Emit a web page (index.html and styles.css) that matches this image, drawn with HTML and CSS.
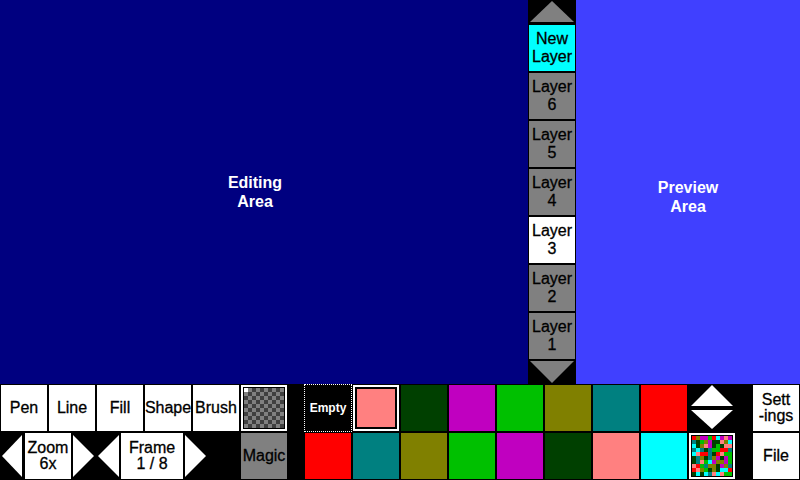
FILE: index.html
```html
<!DOCTYPE html>
<html lang="en">
<head>
  <meta charset="UTF-8">
  <title>Pixel Editor</title>
  <link rel="stylesheet" href="styles.css">
</head>
<body>
  <div class="screen">
    <div class="workspace">
      <div class="editing"><span>Editing<br>Area</span></div>

      <!-- Layer list -->
      <div class="layers">
        <div class="layer-arrow">
          <svg width="48" height="24" viewBox="0 0 48 24"><polygon points="2,22 24,1 46,22" fill="#808080"/></svg>
        </div>
        <div class="layer new">New<br>Layer</div>
        <div class="layer">Layer<br>6</div>
        <div class="layer">Layer<br>5</div>
        <div class="layer">Layer<br>4</div>
        <div class="layer current">Layer<br>3</div>
        <div class="layer">Layer<br>2</div>
        <div class="layer">Layer<br>1</div>
        <div class="layer-arrow">
          <svg width="48" height="24" viewBox="0 0 48 24"><polygon points="2,1 46,1 24,23" fill="#808080"/></svg>
        </div>
      </div>

      <div class="preview"><span>Preview<br>Area</span></div>
    </div>

    <!-- Bottom toolbar -->
    <div class="toolbar">
      <div class="btn">Pen</div>
      <div class="btn">Line</div>
      <div class="btn">Fill</div>
      <div class="btn">Shape</div>
      <div class="btn">Brush</div>
      <div class="cell">
        <div class="framed"><div class="checker"></div></div>
      </div>
      <div class="spacer"></div>
      <div class="cell empty"><span>Empty</span></div>
      <div class="cell">
        <div class="framed"><div class="swatch pink"></div></div>
      </div>
      <div class="cell darkgreen"></div>
      <div class="cell magenta"></div>
      <div class="cell green"></div>
      <div class="cell olive"></div>
      <div class="cell teal"></div>
      <div class="cell red"></div>
      <div class="cell dark">
        <svg width="46" height="46" viewBox="0 0 46 46">
          <polygon points="2,21 23,0 44,21" fill="#fff"/>
          <polygon points="2,25 44,25 23,44" fill="#fff"/>
        </svg>
      </div>
      <div class="spacer"></div>
      <div class="btn">Sett<br>-ings</div>

      <div class="nav">
        <div class="arrow">
          <svg width="24" height="48" viewBox="0 0 24 48"><polygon points="2,24 22,3 22,45" fill="#fff"/></svg>
        </div>
        <div class="btn">Zoom<br>6x</div>
        <div class="arrow">
          <svg width="24" height="48" viewBox="0 0 24 48"><polygon points="1,3 22,24 1,45" fill="#fff"/></svg>
        </div>
        <div class="arrow">
          <svg width="24" height="48" viewBox="0 0 24 48"><polygon points="2,24 23,3 23,45" fill="#fff"/></svg>
        </div>
        <div class="btn wide">Frame<br>1 / 8</div>
        <div class="arrow">
          <svg width="24" height="48" viewBox="0 0 24 48"><polygon points="1,3 22,24 1,45" fill="#fff"/></svg>
        </div>
      </div>
      <div class="btn magic">Magic</div>
      <div class="spacer"></div>
      <div class="cell red"></div>
      <div class="cell teal"></div>
      <div class="cell olive"></div>
      <div class="cell green"></div>
      <div class="cell magenta"></div>
      <div class="cell darkgreen"></div>
      <div class="cell pink"></div>
      <div class="cell cyan"></div>
      <div class="cell">
        <div class="framed"><div class="mix" id="mix"></div></div>
      </div>
      <div class="spacer"></div>
      <div class="btn">File</div>
    </div>
  </div>

  <script src="script.js"></script>
</body>
</html>
```

FILE: styles.css
```css
body {
  margin: 0;
  background-color: #000;
  font-family: "Liberation Sans", Arial, sans-serif;
  font-size: 16px;
}

.screen {
  width: 800px;
  height: 480px;
  overflow: hidden;
}

.workspace {
  display: flex;
  height: 384px;
}

.editing {
  width: 528px;
  padding-right: 18px;
  box-sizing: border-box;
  background-color: #000080;
  color: #fff;
  font-weight: bold;
  line-height: 19px;
  text-align: center;
  display: flex;
  align-items: center;
  justify-content: center;
}

.preview {
  flex: 1;
  padding-top: 10px;
  box-sizing: border-box;
  background-color: #4040ff;
  color: #fff;
  font-weight: bold;
  line-height: 19px;
  text-align: center;
  display: flex;
  align-items: center;
  justify-content: center;
}

/* columna de capas */
.layers {
  width: 48px;
  display: flex;
  flex-direction: column;
  background-color: #000;
}

.layer-arrow {
  height: 24px;
}

.layer-arrow svg {
  display: block;
}

.layer {
  height: 48px;
  box-sizing: border-box;
  border: 1px solid #000;
  background-color: #808080;
  color: #000;
  line-height: 18px;
  text-align: center;
  -webkit-text-stroke: 0.3px #000;
  display: flex;
  align-items: center;
  justify-content: center;
}

.layer.new {
  background-color: #00ffff;
}

.layer.current {
  background-color: #fff;
}

/* barra inferior */
.toolbar {
  display: grid;
  grid-template-columns: repeat(6, 48px) 16px repeat(9, 48px) 16px 48px;
  grid-template-rows: 48px 48px;
  height: 96px;
}

.cell,
.btn {
  box-sizing: border-box;
  border: 1px solid #000;
}

.btn {
  background-color: #fff;
  color: #000;
  line-height: 16px;
  text-align: center;
  -webkit-text-stroke: 0.3px #000;
  display: flex;
  align-items: center;
  justify-content: center;
}

.btn.magic {
  background-color: #808080;
}

.dark {
  background-color: #000;
}

.dark svg {
  display: block;
}

.framed {
  border: 2px solid #fff;
  height: 100%;
  box-sizing: border-box;
  padding: 1px;
  background-color: #000;
}

.checker {
  position: relative;
  height: 100%;
  background: repeating-conic-gradient(#808080 0 25%, #404040 0 50%) 0 0 / 8px 8px;
}

.checker::before {
  content: "";
  position: absolute;
  left: 0;
  top: 0;
  width: 4px;
  height: 4px;
  background-color: #fff;
}

.swatch {
  height: 100%;
  box-sizing: border-box;
  border: 1px solid #000;
}

.mix {
  display: grid;
  grid-template-columns: repeat(10, 4px);
  grid-template-rows: repeat(10, 4px);
}

.empty {
  background-color: #000;
  border: 1px dotted #fff;
  color: #fff;
  font-size: 12px;
  font-weight: bold;
  display: flex;
  align-items: center;
  justify-content: center;
}

.nav {
  grid-column: span 5;
  display: flex;
}

.nav .btn {
  width: 48px;
}

.nav .btn.wide {
  width: 64px;
}

.arrow {
  width: 24px;
}

.arrow svg {
  display: block;
}

.red { background-color: #ff0000; }
.teal { background-color: #008080; }
.olive { background-color: #808000; }
.green { background-color: #00c000; }
.magenta { background-color: #c000c0; }
.darkgreen { background-color: #004000; }
.pink { background-color: #ff8080; }
.cyan { background-color: #00ffff; }
```

FILE: script.js
```js
// Mezcla de colores de la paleta para el pincel aleatorio
var colores = ['cyan', 'magenta', 'green', 'pink', 'red', 'teal', 'olive', 'darkgreen'];
var mix = document.getElementById('mix');
var semilla = 7;

function siguiente() {
  semilla = (semilla * 1103515245 + 12345) % 2147483648;
  return Math.floor(semilla / 65536) % colores.length;
}

for (var i = 0; i < 100; i++) {
  var celda = document.createElement('div');
  celda.className = colores[siguiente()];
  mix.appendChild(celda);
}
```
